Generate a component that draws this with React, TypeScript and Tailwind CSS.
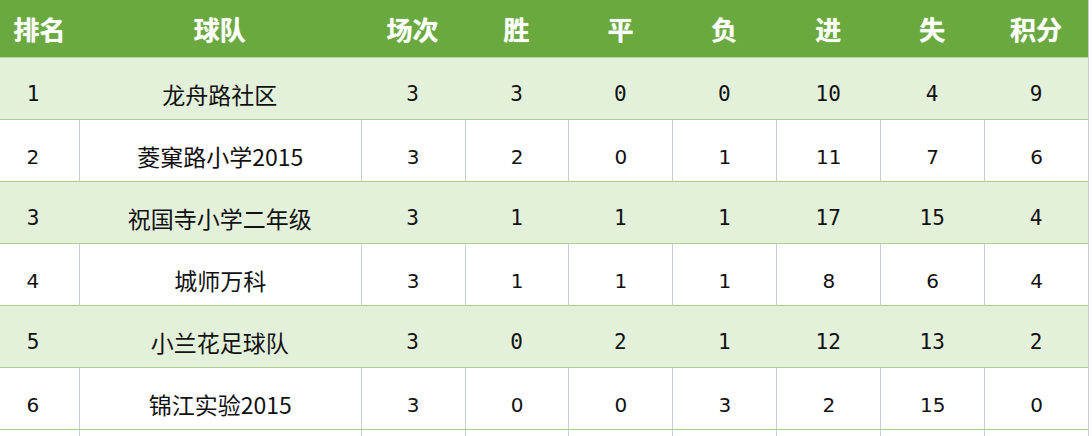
import React from "react";

const headers = ["排名", "球队", "场次", "胜", "平", "负", "进", "失", "积分"];
const rows: (string | number)[][] = [
  [1, "龙舟路社区", 3, 3, 0, 0, 10, 4, 9],
  [2, "菱窠路小学2015", 3, 2, 0, 1, 11, 7, 6],
  [3, "祝国寺小学二年级", 3, 1, 1, 1, 17, 15, 4],
  [4, "城师万科", 3, 1, 1, 1, 8, 6, 4],
  [5, "小兰花足球队", 3, 0, 2, 1, 12, 13, 2],
  [6, "锦江实验2015", 3, 0, 0, 3, 2, 15, 0],
];

const widths = ["w-[79px]", "w-[282px]", "w-[104px]", "w-[104px]", "w-[104px]", "w-[104px]", "w-[104px]", "w-[104px]", "w-[104px]"];

export default function App() {
  return (
    <div className="w-[1092px] h-[436px] overflow-hidden bg-white">
      <div className="w-[1089px] border-r border-[#c9cdd8]">
        <div className="flex h-[58px] bg-[#6aa940] border-b border-[#b9d9a3]">
          {headers.map((h, i) => (
            <div
              key={i}
              className={`${widths[i]} flex items-center justify-center text-[26px] font-bold text-white [text-shadow:0_0_1px_#d8f0c8] [font-family:'Noto_Sans_CJK_SC',sans-serif]`}
            >
              {h}
            </div>
          ))}
        </div>
        {rows.map((r, ri) => {
          const green = ri % 2 === 0;
          return (
            <div
              key={ri}
              className={`flex h-[62px] border-b border-[#a9cf90] ${green ? "bg-[#e3f0da]" : "bg-white"}`}
            >
              {r.map((c, ci) => (
                <div
                  key={ci}
                  className={`${widths[ci]} flex items-center justify-center pt-[12px] text-[#111] ${
                    !green && ci > 0 ? "border-l border-[#c9cdd8]" : ""
                  } ${ci === 0 ? "pr-[13px]" : ""} ${
                    ci === 1
                      ? "text-[23px] [font-family:'Noto_Sans_CJK_SC',sans-serif]"
                      : green
                      ? "text-[21px] [font-family:'DejaVu_Sans_Mono',monospace]"
                      : "text-[20px] [font-family:'DejaVu_Sans',sans-serif]"
                  }`}
                >
                  {c}
                </div>
              ))}
            </div>
          );
        })}
        <div className="flex h-[62px] bg-white">
          {widths.map((w, i) => (
            <div key={i} className={`${w} ${i > 0 ? "border-l border-[#c9cdd8]" : ""}`} />
          ))}
        </div>
      </div>
    </div>
  );
}
